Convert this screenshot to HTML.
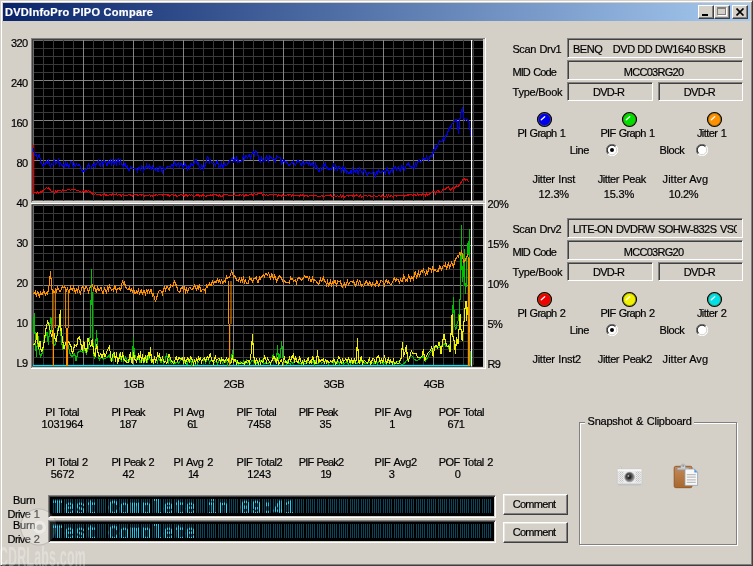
<!DOCTYPE html>
<html lang="en"><head><meta charset="utf-8"><title>DVDInfoPro PIPO Compare</title>
<style>
html,body{margin:0;padding:0}
body{width:753px;height:566px;overflow:hidden;background:#d4d0c8;font-family:"Liberation Sans",sans-serif;font-size:11px;line-height:13px;color:#000;position:relative}
.win{position:absolute;left:0;top:0;width:753px;height:566px;box-sizing:border-box;border:1px solid;border-color:#d4d0c8 #404040 #404040 #d4d0c8;box-shadow:inset 1px 1px 0 #fff,inset -1px -1px 0 #808080}
.title{position:absolute;left:3px;top:3px;width:747px;height:18px;background:linear-gradient(90deg,#0a246a 0%,#a6caf0 100%)}
.t{position:absolute;white-space:pre;line-height:13px;height:13px;-webkit-text-stroke:0.2px #000}
.ttl{color:#fff;font-weight:bold;-webkit-text-stroke:0.2px #fff}
.abs{position:absolute}
.tb{position:absolute;top:5px;width:16px;height:14px;box-sizing:border-box;background:#d4d0c8;border:1px solid;border-color:#fff #404040 #404040 #fff;box-shadow:inset -1px -1px 0 #808080}
.sunk{position:absolute;box-sizing:border-box;border:1px solid;border-color:#808080 #fff #fff #808080;box-shadow:inset 1px 1px 0 #404040,inset -1px -1px 0 #d4d0c8;overflow:hidden}
.btn{position:absolute;box-sizing:border-box;border:1px solid;border-color:#fff #404040 #404040 #fff;box-shadow:inset -1px -1px 0 #808080,inset 1px 1px 0 #e8e6e0;background:#d4d0c8}
.grp{position:absolute;box-sizing:border-box;border:1px solid #808080;box-shadow:1px 1px 0 #fff,inset 1px 1px 0 #fff}
.chart{position:absolute;left:31px;top:38px}
.lcd{position:absolute;box-sizing:border-box;background:#000;border:1px solid;border-color:#808080 #fff #fff #808080;box-shadow:inset 1px 1px 0 #404040,inset -1px -1px 0 #d4d0c8;overflow:hidden}
.lcdbg{position:absolute;left:4px;top:3px;width:440px;height:14px;background:repeating-linear-gradient(90deg,#0a465c 0.00px,#0a465c 1.00px,#000 1.00px,#000 2.00px,#0a465c 2.00px,#0a465c 3.00px,#000 3.00px,#000 4.00px,#0a465c 4.00px,#0a465c 5.00px,#000 5.00px,#000 6.00px,#0a465c 6.00px,#0a465c 7.00px,#000 7.00px,#000 8.00px,#0a465c 8.00px,#0a465c 9.00px,#000 9.00px,#000 11px)}
.lcdclip{position:absolute;left:4px;top:3px;width:440px;height:14px;overflow:hidden}
.lcdtx{position:absolute;left:0;top:-2.2px;font-family:"Liberation Mono",monospace;font-weight:normal;font-size:18px;line-height:20px;height:20px;letter-spacing:0.2px;color:#20dcff;-webkit-text-stroke:0.7px #20dcff;white-space:pre;transform-origin:0 0;transform:scale(1,1.115);-webkit-mask-image:repeating-linear-gradient(90deg,#000 0.00px,#000 1.25px,transparent 1.25px,transparent 1.75px,#000 1.75px,#000 3.25px,transparent 3.25px,transparent 3.75px,#000 3.75px,#000 5.25px,transparent 5.25px,transparent 5.75px,#000 5.75px,#000 7.25px,transparent 7.25px,transparent 7.75px,#000 7.75px,#000 9.25px,transparent 9.25px,transparent 11px);mask-image:repeating-linear-gradient(90deg,#000 0.00px,#000 1.25px,transparent 1.25px,transparent 1.75px,#000 1.75px,#000 3.25px,transparent 3.25px,transparent 3.75px,#000 3.75px,#000 5.25px,transparent 5.25px,transparent 5.75px,#000 5.75px,#000 7.25px,transparent 7.25px,transparent 7.75px,#000 7.75px,#000 9.25px,transparent 9.25px,transparent 11px)}
.wm{position:absolute;left:-1px;top:542px;font-family:"Liberation Sans",sans-serif;font-weight:bold;font-size:27px;line-height:30px;letter-spacing:0.6px;color:rgba(255,255,255,.30);white-space:pre;transform-origin:0 0;transform:scale(.455,1)}
</style></head><body><div id="app" style="position:absolute;left:0;top:0;width:753px;height:566px;will-change:transform">
<div class="win"></div>
<div class="title"></div>
<span class="t ttl" style="left:5.0px;top:6.0px;letter-spacing:0.28px;">DVDInfoPro PIPO Compare</span>
<div class="tb" style="left:698px"><div class="abs" style="left:3px;top:8px;width:6px;height:2px;background:#000"></div></div>
<div class="tb" style="left:714px"><div class="abs" style="left:2px;top:1px;width:9px;height:8px;box-sizing:border-box;border:1px solid #808080;border-top-width:2px;box-shadow:1px 1px 0 #fff"></div></div>
<div class="tb" style="left:732px"><svg class="abs" style="left:3px;top:2px" width="9" height="8" viewBox="0 0 9 8"><path d="M0.5 0.5 L7.5 7.5 M7.5 0.5 L0.5 7.5" stroke="#000" stroke-width="1.7" fill="none"/></svg></div>
<svg class="chart" width="455" height="331" viewBox="31 38 455 331">
<rect x="31" y="38" width="455" height="166.2" fill="#fff"/>
<rect x="31" y="38" width="454" height="164.6" fill="#808080"/>
<rect x="32" y="39" width="453" height="163.6" fill="#d4d0c8"/>
<rect x="32" y="39" width="451" height="162" fill="#404040"/>
<rect x="33" y="40" width="450" height="161" fill="#000"/>
<rect x="31" y="204.2" width="455" height="164.8" fill="#fff"/>
<rect x="31" y="204.2" width="454" height="163.8" fill="#808080"/>
<rect x="32" y="204.2" width="453" height="163.8" fill="#d4d0c8"/>
<rect x="32" y="204.2" width="451" height="162.6" fill="#404040"/>
<rect x="33" y="205" width="450" height="161.7" fill="#000"/>
<rect x="33" y="40" width="450" height="1" fill="#6a6a6a"/><rect x="33" y="48" width="450" height="1" fill="#393939"/><rect x="33" y="56" width="450" height="1" fill="#393939"/><rect x="33" y="64" width="450" height="1" fill="#393939"/><rect x="33" y="72" width="450" height="1" fill="#393939"/><rect x="33" y="80" width="450" height="1" fill="#848484"/><rect x="33" y="88" width="450" height="1" fill="#393939"/><rect x="33" y="96" width="450" height="1" fill="#393939"/><rect x="33" y="104" width="450" height="1" fill="#393939"/><rect x="33" y="112" width="450" height="1" fill="#393939"/><rect x="33" y="120" width="450" height="1" fill="#848484"/><rect x="33" y="128" width="450" height="1" fill="#393939"/><rect x="33" y="136" width="450" height="1" fill="#393939"/><rect x="33" y="144" width="450" height="1" fill="#393939"/><rect x="33" y="152" width="450" height="1" fill="#393939"/><rect x="33" y="160" width="450" height="1" fill="#848484"/><rect x="33" y="168" width="450" height="1" fill="#393939"/><rect x="33" y="176" width="450" height="1" fill="#393939"/><rect x="33" y="184" width="450" height="1" fill="#393939"/><rect x="33" y="192" width="450" height="1" fill="#393939"/><rect x="33" y="200" width="450" height="1" fill="#6a6a6a"/><rect x="33" y="40" width="1" height="161" fill="#6a6a6a"/><rect x="43" y="40" width="1" height="161" fill="#393939"/><rect x="53" y="40" width="1" height="161" fill="#393939"/><rect x="63" y="40" width="1" height="161" fill="#393939"/><rect x="73" y="40" width="1" height="161" fill="#393939"/><rect x="83" y="40" width="1" height="161" fill="#848484"/><rect x="93" y="40" width="1" height="161" fill="#393939"/><rect x="103" y="40" width="1" height="161" fill="#393939"/><rect x="113" y="40" width="1" height="161" fill="#393939"/><rect x="123" y="40" width="1" height="161" fill="#393939"/><rect x="133" y="40" width="1" height="161" fill="#848484"/><rect x="143" y="40" width="1" height="161" fill="#393939"/><rect x="153" y="40" width="1" height="161" fill="#393939"/><rect x="163" y="40" width="1" height="161" fill="#393939"/><rect x="173" y="40" width="1" height="161" fill="#393939"/><rect x="183" y="40" width="1" height="161" fill="#848484"/><rect x="193" y="40" width="1" height="161" fill="#393939"/><rect x="203" y="40" width="1" height="161" fill="#393939"/><rect x="213" y="40" width="1" height="161" fill="#393939"/><rect x="223" y="40" width="1" height="161" fill="#393939"/><rect x="233" y="40" width="1" height="161" fill="#848484"/><rect x="243" y="40" width="1" height="161" fill="#393939"/><rect x="253" y="40" width="1" height="161" fill="#393939"/><rect x="263" y="40" width="1" height="161" fill="#393939"/><rect x="273" y="40" width="1" height="161" fill="#393939"/><rect x="283" y="40" width="1" height="161" fill="#848484"/><rect x="293" y="40" width="1" height="161" fill="#393939"/><rect x="303" y="40" width="1" height="161" fill="#393939"/><rect x="313" y="40" width="1" height="161" fill="#393939"/><rect x="323" y="40" width="1" height="161" fill="#393939"/><rect x="333" y="40" width="1" height="161" fill="#848484"/><rect x="343" y="40" width="1" height="161" fill="#393939"/><rect x="353" y="40" width="1" height="161" fill="#393939"/><rect x="363" y="40" width="1" height="161" fill="#393939"/><rect x="373" y="40" width="1" height="161" fill="#393939"/><rect x="383" y="40" width="1" height="161" fill="#848484"/><rect x="393" y="40" width="1" height="161" fill="#393939"/><rect x="403" y="40" width="1" height="161" fill="#393939"/><rect x="413" y="40" width="1" height="161" fill="#393939"/><rect x="423" y="40" width="1" height="161" fill="#393939"/><rect x="433" y="40" width="1" height="161" fill="#848484"/><rect x="443" y="40" width="1" height="161" fill="#393939"/><rect x="453" y="40" width="1" height="161" fill="#393939"/><rect x="463" y="40" width="1" height="161" fill="#393939"/><rect x="473" y="40" width="1" height="161" fill="#393939"/><rect x="33" y="205" width="450" height="1" fill="#6a6a6a"/><rect x="33" y="213" width="450" height="1" fill="#393939"/><rect x="33" y="221" width="450" height="1" fill="#393939"/><rect x="33" y="229" width="450" height="1" fill="#393939"/><rect x="33" y="237" width="450" height="1" fill="#393939"/><rect x="33" y="245" width="450" height="1" fill="#848484"/><rect x="33" y="253" width="450" height="1" fill="#393939"/><rect x="33" y="261" width="450" height="1" fill="#393939"/><rect x="33" y="269" width="450" height="1" fill="#393939"/><rect x="33" y="277" width="450" height="1" fill="#393939"/><rect x="33" y="285" width="450" height="1" fill="#848484"/><rect x="33" y="293" width="450" height="1" fill="#393939"/><rect x="33" y="301" width="450" height="1" fill="#393939"/><rect x="33" y="309" width="450" height="1" fill="#393939"/><rect x="33" y="317" width="450" height="1" fill="#393939"/><rect x="33" y="325" width="450" height="1" fill="#848484"/><rect x="33" y="333" width="450" height="1" fill="#393939"/><rect x="33" y="341" width="450" height="1" fill="#393939"/><rect x="33" y="349" width="450" height="1" fill="#393939"/><rect x="33" y="357" width="450" height="1" fill="#393939"/><rect x="33" y="205" width="1" height="160" fill="#6a6a6a"/><rect x="43" y="205" width="1" height="160" fill="#393939"/><rect x="53" y="205" width="1" height="160" fill="#393939"/><rect x="63" y="205" width="1" height="160" fill="#393939"/><rect x="73" y="205" width="1" height="160" fill="#393939"/><rect x="83" y="205" width="1" height="160" fill="#848484"/><rect x="93" y="205" width="1" height="160" fill="#393939"/><rect x="103" y="205" width="1" height="160" fill="#393939"/><rect x="113" y="205" width="1" height="160" fill="#393939"/><rect x="123" y="205" width="1" height="160" fill="#393939"/><rect x="133" y="205" width="1" height="160" fill="#848484"/><rect x="143" y="205" width="1" height="160" fill="#393939"/><rect x="153" y="205" width="1" height="160" fill="#393939"/><rect x="163" y="205" width="1" height="160" fill="#393939"/><rect x="173" y="205" width="1" height="160" fill="#393939"/><rect x="183" y="205" width="1" height="160" fill="#848484"/><rect x="193" y="205" width="1" height="160" fill="#393939"/><rect x="203" y="205" width="1" height="160" fill="#393939"/><rect x="213" y="205" width="1" height="160" fill="#393939"/><rect x="223" y="205" width="1" height="160" fill="#393939"/><rect x="233" y="205" width="1" height="160" fill="#848484"/><rect x="243" y="205" width="1" height="160" fill="#393939"/><rect x="253" y="205" width="1" height="160" fill="#393939"/><rect x="263" y="205" width="1" height="160" fill="#393939"/><rect x="273" y="205" width="1" height="160" fill="#393939"/><rect x="283" y="205" width="1" height="160" fill="#848484"/><rect x="293" y="205" width="1" height="160" fill="#393939"/><rect x="303" y="205" width="1" height="160" fill="#393939"/><rect x="313" y="205" width="1" height="160" fill="#393939"/><rect x="323" y="205" width="1" height="160" fill="#393939"/><rect x="333" y="205" width="1" height="160" fill="#848484"/><rect x="343" y="205" width="1" height="160" fill="#393939"/><rect x="353" y="205" width="1" height="160" fill="#393939"/><rect x="363" y="205" width="1" height="160" fill="#393939"/><rect x="373" y="205" width="1" height="160" fill="#393939"/><rect x="383" y="205" width="1" height="160" fill="#848484"/><rect x="393" y="205" width="1" height="160" fill="#393939"/><rect x="403" y="205" width="1" height="160" fill="#393939"/><rect x="413" y="205" width="1" height="160" fill="#393939"/><rect x="423" y="205" width="1" height="160" fill="#393939"/><rect x="433" y="205" width="1" height="160" fill="#848484"/><rect x="443" y="205" width="1" height="160" fill="#393939"/><rect x="453" y="205" width="1" height="160" fill="#393939"/><rect x="463" y="205" width="1" height="160" fill="#393939"/><rect x="473" y="205" width="1" height="160" fill="#393939"/>
<rect x="33" y="364.9" width="437.5" height="1.5" fill="#10e0f0"/>
<clipPath id="cu"><rect x="33" y="40" width="450" height="161"/></clipPath>
<g clip-path="url(#cu)">
<polyline points="34.5,192.6 35.5,192.3 36.5,193.3 37.5,192.1 38.5,193.1 39.5,192.7 40.5,191.8 41.5,192.1 42.5,190.6 43.5,190.8 44.5,189.4 45.5,188.4 46.5,187.6 47.5,188.2 48.5,187.7 49.5,188.9 50.5,190.5 51.5,191.5 52.5,191.2 53.5,191.2 54.5,192.8 55.5,191.0 56.5,192.4 57.5,191.1 58.5,190.6 59.5,190.3 60.5,190.6 61.5,191.5 62.5,190.1 63.5,190.8 64.5,190.8 65.5,190.2 66.5,190.4 67.5,189.4 68.5,189.3 69.5,189.5 70.5,190.3 71.5,189.7 72.5,189.4 73.5,189.8 74.5,189.5 75.5,189.3 76.5,190.7 77.5,190.9 78.5,190.4 79.5,191.4 80.5,191.5 81.5,192.2 82.5,191.8 83.5,190.9 84.5,192.2 85.5,190.4 86.5,190.9 87.5,191.5 88.5,190.6 89.5,191.9 90.5,191.6 91.5,193.5 92.5,194.1 93.5,193.8 94.5,194.6 95.5,193.6 96.5,194.5 97.5,194.4 98.5,194.5 99.5,194.3 100.5,195.2 101.5,195.4 102.5,194.5 103.5,194.9 104.5,193.7 105.5,195.0 106.5,195.0 107.5,195.7 108.5,195.4 109.5,194.3 110.5,194.5 111.5,195.1 112.5,193.9 113.5,194.8 114.5,194.2 115.5,194.1 116.5,194.0 117.5,195.5 118.5,194.2 119.5,194.5 120.5,194.8 121.5,195.8 122.5,194.2 123.5,194.9 124.5,195.1 125.5,195.8 126.5,195.7 127.5,195.8 128.5,194.6 129.5,194.9 130.5,194.8 131.5,195.9 132.5,196.0 133.5,194.4 134.5,194.5 135.5,194.6 136.5,194.6 137.5,195.1 138.5,195.3 139.5,194.7 140.5,194.2 141.5,195.0 142.5,194.9 143.5,195.3 144.5,196.1 145.5,195.6 146.5,195.3 147.5,195.5 148.5,195.6 149.5,194.4 150.5,196.1 151.5,195.8 152.5,196.0 153.5,195.9 154.5,195.1 155.5,195.1 156.5,194.5 157.5,195.6 158.5,194.4 159.5,194.5 160.5,194.8 161.5,194.7 162.5,195.0 163.5,194.5 164.5,194.4 165.5,194.7 166.5,194.6 167.5,195.1 168.5,194.5 169.5,196.2 170.5,195.6 171.5,194.7 172.5,194.9 173.5,195.1 174.5,195.2 175.5,194.7 176.5,196.2 177.5,196.5 178.5,195.4 179.5,195.5 180.5,194.7 181.5,194.7 182.5,195.2 183.5,195.0 184.5,196.1 185.5,194.8 186.5,194.5 187.5,196.3 188.5,195.5 189.5,194.7 190.5,195.5 191.5,194.5 192.5,195.5 193.5,196.4 194.5,196.1 195.5,195.8 196.5,194.9 197.5,195.1 198.5,194.7 199.5,195.9 200.5,195.4 201.5,195.9 202.5,195.0 203.5,194.8 204.5,195.9 205.5,196.3 206.5,196.0 207.5,195.9 208.5,195.9 209.5,195.8 210.5,194.7 211.5,195.3 212.5,195.0 213.5,194.3 214.5,194.3 215.5,194.8 216.5,194.8 217.5,195.6 218.5,196.1 219.5,195.1 220.5,196.1 221.5,196.2 222.5,196.1 223.5,194.9 224.5,194.6 225.5,194.6 226.5,194.6 227.5,194.6 228.5,195.4 229.5,195.9 230.5,195.8 231.5,195.1 232.5,195.4 233.5,195.7 234.5,194.3 235.5,195.4 236.5,195.9 237.5,195.7 238.5,195.6 239.5,195.0 240.5,194.4 241.5,195.6 242.5,194.7 243.5,195.6 244.5,196.0 245.5,194.8 246.5,194.8 247.5,195.9 248.5,195.5 249.5,194.3 250.5,194.2 251.5,194.0 252.5,195.3 253.5,195.0 254.5,193.4 255.5,194.6 256.5,194.7 257.5,193.9 258.5,193.3 259.5,193.8 260.5,193.1 261.5,193.0 262.5,195.0 263.5,194.5 264.5,194.4 265.5,195.3 266.5,194.4 267.5,195.4 268.5,195.5 269.5,194.4 270.5,194.5 271.5,194.6 272.5,194.5 273.5,195.2 274.5,194.6 275.5,194.9 276.5,194.4 277.5,195.9 278.5,194.8 279.5,195.1 280.5,195.3 281.5,196.0 282.5,195.0 283.5,196.1 284.5,195.2 285.5,195.3 286.5,195.3 287.5,194.3 288.5,195.2 289.5,194.7 290.5,194.3 291.5,196.0 292.5,194.7 293.5,195.3 294.5,195.9 295.5,195.5 296.5,195.1 297.5,195.5 298.5,195.6 299.5,196.1 300.5,194.7 301.5,195.6 302.5,195.0 303.5,195.1 304.5,196.1 305.5,195.6 306.5,195.7 307.5,196.1 308.5,196.5 309.5,195.5 310.5,195.9 311.5,195.7 312.5,195.7 313.5,196.1 314.5,195.6 315.5,195.8 316.5,195.7 317.5,196.7 318.5,196.2 319.5,196.6 320.5,196.7 321.5,195.4 322.5,196.0 323.5,196.8 324.5,196.6 325.5,195.2 326.5,195.2 327.5,195.8 328.5,195.1 329.5,195.5 330.5,195.1 331.5,196.3 332.5,196.6 333.5,196.8 334.5,195.3 335.5,196.4 336.5,196.3 337.5,195.3 338.5,196.8 339.5,196.9 340.5,195.4 341.5,196.9 342.5,195.8 343.5,196.0 344.5,197.0 345.5,196.7 346.5,195.3 347.5,195.9 348.5,196.0 349.5,195.7 350.5,195.4 351.5,195.6 352.5,196.4 353.5,195.0 354.5,196.1 355.5,195.9 356.5,195.0 357.5,195.7 358.5,196.2 359.5,196.0 360.5,195.1 361.5,197.0 362.5,196.6 363.5,196.9 364.5,195.2 365.5,195.5 366.5,195.1 367.5,196.6 368.5,195.5 369.5,195.3 370.5,195.8 371.5,196.8 372.5,196.6 373.5,195.5 374.5,195.3 375.5,196.8 376.5,196.1 377.5,196.4 378.5,195.2 379.5,195.1 380.5,196.4 381.5,195.9 382.5,195.1 383.5,196.9 384.5,196.3 385.5,196.6 386.5,195.2 387.5,196.7 388.5,195.1 389.5,196.7 390.5,195.9 391.5,195.7 392.5,196.1 393.5,196.9 394.5,195.5 395.5,195.3 396.5,196.1 397.5,195.5 398.5,195.2 399.5,195.3 400.5,195.1 401.5,195.3 402.5,195.5 403.5,195.4 404.5,196.2 405.5,195.2 406.5,195.6 407.5,194.9 408.5,195.1 409.5,194.4 410.5,194.8 411.5,194.3 412.5,195.6 413.5,195.2 414.5,194.4 415.5,194.9 416.5,195.7 417.5,194.0 418.5,195.3 419.5,194.4 420.5,194.4 421.5,195.0 422.5,194.0 423.5,194.2 424.5,194.4 425.5,195.7 426.5,193.3 427.5,194.9 428.5,194.4 429.5,194.0 430.5,193.1 431.5,192.7 432.5,191.4 433.5,191.5 434.5,191.1 435.5,193.3 436.5,191.3 437.5,190.8 438.5,190.3 439.5,192.8 440.5,192.7 441.5,191.7 442.5,190.0 443.5,189.5 444.5,189.4 445.5,189.4 446.5,187.3 447.5,187.3 448.5,186.4 449.5,189.4 450.5,190.0 451.5,188.9 452.5,187.9 453.5,190.2 454.5,187.5 455.5,187.3 456.5,185.7 457.5,186.7 458.5,186.2 459.5,185.0 460.5,182.6 461.5,182.5 462.5,179.7 463.5,179.7 464.5,178.8 465.5,180.4 466.5,179.6 467.5,180.0 468.5,181.8" fill="none" stroke="#f00000" stroke-width="1.1" shape-rendering="crispEdges"/>
<rect x="33" y="145" width="1.3" height="49" fill="#e80000"/>
<polyline points="33.5,148.5 34.5,155.1 35.5,155.2 36.5,155.0 37.5,158.5 38.5,155.6 39.5,154.5 40.5,161.2 41.5,163.3 42.5,164.7 43.5,166.2 44.5,163.3 45.5,164.3 46.5,161.2 47.5,163.1 48.5,160.4 49.5,164.6 50.5,166.4 51.5,163.6 52.5,164.7 53.5,163.8 54.5,159.1 55.5,164.0 56.5,163.0 57.5,161.1 58.5,159.3 59.5,165.5 60.5,162.9 61.5,164.7 62.5,166.0 63.5,164.9 64.5,166.5 65.5,162.8 66.5,165.8 67.5,163.4 68.5,167.0 69.5,166.7 70.5,161.2 71.5,161.7 72.5,162.5 73.5,168.1 74.5,164.4 75.5,166.0 76.5,163.9 77.5,165.6 78.5,164.9 79.5,164.8 80.5,167.3 81.5,168.6 82.5,172.2 83.5,170.6 84.5,171.1 85.5,169.2 86.5,169.4 87.5,166.9 88.5,162.9 89.5,167.7 90.5,168.2 91.5,167.6 92.5,165.0 93.5,165.8 94.5,162.0 95.5,166.3 96.5,164.2 97.5,162.0 98.5,160.2 99.5,165.6 100.5,166.5 101.5,160.0 102.5,165.2 103.5,162.4 104.5,160.5 105.5,161.5 106.5,164.9 107.5,165.7 108.5,159.7 109.5,163.8 110.5,159.5 111.5,163.9 112.5,160.7 113.5,164.2 114.5,164.5 115.5,160.7 116.5,163.8 117.5,159.2 118.5,158.8 119.5,163.7 120.5,160.8 121.5,163.2 122.5,165.4 123.5,167.0 124.5,163.9 125.5,163.2 126.5,169.3 127.5,165.5 128.5,170.3 129.5,170.0 130.5,166.4 131.5,167.2 132.5,167.8 133.5,168.8 134.5,168.6 135.5,168.4 136.5,168.9 137.5,171.2 138.5,168.1 139.5,167.5 140.5,169.6 141.5,166.1 142.5,166.6 143.5,171.4 144.5,168.2 145.5,168.3 146.5,164.5 147.5,167.4 148.5,168.6 149.5,164.5 150.5,168.9 151.5,169.3 152.5,165.3 153.5,169.6 154.5,168.7 155.5,170.4 156.5,168.2 157.5,171.0 158.5,171.4 159.5,166.5 160.5,166.7 161.5,170.9 162.5,172.7 163.5,167.3 164.5,168.6 165.5,169.3 166.5,167.1 167.5,167.1 168.5,166.4 169.5,166.3 170.5,167.4 171.5,164.8 172.5,164.9 173.5,167.2 174.5,161.3 175.5,164.7 176.5,165.9 177.5,163.1 178.5,162.8 179.5,167.4 180.5,163.6 181.5,163.6 182.5,165.6 183.5,167.6 184.5,163.4 185.5,165.2 186.5,165.4 187.5,169.1 188.5,166.4 189.5,169.5 190.5,164.0 191.5,164.0 192.5,165.1 193.5,165.6 194.5,161.2 195.5,159.6 196.5,160.1 197.5,164.3 198.5,163.1 199.5,168.5 200.5,169.2 201.5,165.0 202.5,166.2 203.5,169.2 204.5,166.0 205.5,165.2 206.5,159.9 207.5,156.3 208.5,157.3 209.5,162.4 210.5,160.1 211.5,162.1 212.5,163.4 213.5,163.4 214.5,163.3 215.5,167.0 216.5,161.5 217.5,160.4 218.5,167.2 219.5,166.7 220.5,167.5 221.5,163.5 222.5,167.2 223.5,167.1 224.5,162.0 225.5,165.6 226.5,165.8 227.5,164.2 228.5,162.7 229.5,160.7 230.5,160.7 231.5,159.4 232.5,157.9 233.5,161.2 234.5,158.7 235.5,162.1 236.5,156.4 237.5,162.4 238.5,160.7 239.5,162.2 240.5,161.8 241.5,161.6 242.5,159.1 243.5,154.8 244.5,159.9 245.5,155.4 246.5,155.7 247.5,157.8 248.5,156.2 249.5,154.9 250.5,158.1 251.5,155.2 252.5,152.7 253.5,151.5 254.5,155.0 255.5,151.0 256.5,152.0 257.5,153.7 258.5,157.4 259.5,161.6 260.5,162.3 261.5,156.3 262.5,160.2 263.5,161.2 264.5,160.5 265.5,160.8 266.5,155.0 267.5,159.6 268.5,161.4 269.5,155.7 270.5,157.4 271.5,157.5 272.5,159.4 273.5,158.8 274.5,159.3 275.5,161.5 276.5,156.1 277.5,156.5 278.5,157.2 279.5,157.2 280.5,157.1 281.5,164.2 282.5,163.8 283.5,158.8 284.5,162.3 285.5,161.4 286.5,161.9 287.5,162.7 288.5,165.3 289.5,165.4 290.5,163.9 291.5,162.5 292.5,163.3 293.5,161.6 294.5,164.5 295.5,165.5 296.5,162.8 297.5,160.5 298.5,161.0 299.5,162.2 300.5,163.8 301.5,165.0 302.5,162.1 303.5,165.2 304.5,163.9 305.5,162.5 306.5,162.1 307.5,163.0 308.5,164.5 309.5,162.4 310.5,164.8 311.5,163.8 312.5,163.0 313.5,165.9 314.5,167.8 315.5,164.0 316.5,167.3 317.5,168.1 318.5,171.5 319.5,171.5 320.5,167.0 321.5,170.4 322.5,169.2 323.5,164.9 324.5,166.0 325.5,163.4 326.5,168.6 327.5,167.7 328.5,169.5 329.5,169.0 330.5,168.4 331.5,169.1 332.5,168.2 333.5,165.2 334.5,169.0 335.5,165.1 336.5,166.4 337.5,171.2 338.5,166.3 339.5,166.9 340.5,167.1 341.5,172.8 342.5,167.8 343.5,166.7 344.5,172.7 345.5,167.5 346.5,172.8 347.5,171.6 348.5,172.8 349.5,173.7 350.5,171.1 351.5,172.7 352.5,167.3 353.5,172.6 354.5,170.8 355.5,172.3 356.5,168.0 357.5,172.7 358.5,174.1 359.5,167.8 360.5,169.9 361.5,171.9 362.5,174.1 363.5,170.2 364.5,170.0 365.5,170.8 366.5,173.7 367.5,175.0 368.5,172.7 369.5,172.8 370.5,173.3 371.5,173.3 372.5,173.7 373.5,170.8 374.5,173.4 375.5,176.4 376.5,171.9 377.5,173.9 378.5,169.2 379.5,172.6 380.5,172.8 381.5,172.3 382.5,171.1 383.5,170.9 384.5,172.0 385.5,173.9 386.5,168.5 387.5,168.1 388.5,172.8 389.5,174.0 390.5,171.0 391.5,170.1 392.5,171.8 393.5,167.7 394.5,168.0 395.5,167.2 396.5,169.7 397.5,167.4 398.5,166.5 399.5,169.5 400.5,171.2 401.5,166.2 402.5,169.0 403.5,166.7 404.5,169.6 405.5,167.5 406.5,165.0 407.5,164.5 408.5,162.9 409.5,166.0 410.5,166.2 411.5,166.6 412.5,168.2 413.5,166.5 414.5,168.2 415.5,162.2 416.5,166.8 417.5,161.6 418.5,161.4 419.5,159.9 420.5,162.0 421.5,161.3 422.5,158.8 423.5,157.7 424.5,158.9 425.5,159.6 426.5,156.5 427.5,159.0 428.5,160.8 429.5,157.4 430.5,155.8 431.5,156.0 432.5,156.3 433.5,150.9 434.5,146.8 435.5,149.7 436.5,147.8 437.5,145.4 438.5,143.4 439.5,140.9 440.5,141.5 441.5,141.5 442.5,141.1 443.5,137.9 444.5,139.8 445.5,136.3 446.5,134.7 447.5,133.9 448.5,129.3 449.5,127.4 450.5,128.5 451.5,124.8 452.5,123.4 453.5,122.7 454.5,121.5 455.5,119.2 456.5,119.1 457.5,123.9 458.5,134.0 459.5,121.7 460.5,115.4 461.5,111.0 462.5,107.4 463.5,118.1 464.5,119.0 465.5,120.7 466.5,119.7 467.5,119.5 468.5,121.0 469.5,122.5 470.5,136.0" fill="none" stroke="#0000f0" stroke-width="1.1" shape-rendering="crispEdges"/>
</g>
<clipPath id="cl"><rect x="33" y="205" width="450" height="161.5"/></clipPath>
<g clip-path="url(#cl)">
<polyline points="33.5,332.4 34.2,313.3 35.0,332.4 36.4,356.5 37.8,333.8 39.2,352.2 40.6,356.5 42.7,352.2 44.1,339.5 45.6,336.7 47.0,332.4 48.4,345.2 49.8,325.4 50.9,316.9 51.9,328.2 52.6,343.7 54.8,345.2 56.9,336.7 58.3,326.8 59.7,325.4 61.1,336.7 62.5,349.4 64.7,346.6 66.1,343.7 68.2,345.2 70.3,355.1 72.4,356.5 74.6,353.6 76.0,360.7 78.1,352.2 80.2,350.8 82.3,352.2 84.5,349.4 86.6,353.6 88.7,346.6 90.1,336.7 90.8,312.6 91.7,269.1 92.5,338.1 94.4,359.3 95.8,343.7 96.5,329.6 97.6,349.4 99.3,360.7 101.4,356.5 103.6,359.3 106.4,357.9 109.2,355.1 110.5,359.5 111.5,361.1 112.5,360.7 113.5,353.4 114.5,355.5 115.5,360.5 116.5,354.5 117.5,361.1 118.5,359.8 119.5,354.9 120.5,357.4 121.5,361.7 122.5,353.1 123.5,361.1 124.5,360.8 125.5,355.9 126.5,360.3 127.5,360.5 128.5,361.8 129.5,361.8 130.5,358.1 131.5,361.1 132.5,358.4 133.5,337.0 134.5,360.1 135.5,355.6 136.5,360.3 137.5,359.8 138.5,357.6 139.5,362.5 140.5,362.6 141.5,357.8 142.5,358.5 143.5,362.2 144.5,362.5 145.5,359.0 146.5,357.3 147.5,362.5 148.5,357.1 149.5,357.7 150.5,360.0 151.5,361.2 152.5,362.8 153.5,363.0 154.5,356.8 155.5,362.2 156.5,359.1 157.5,362.1 158.5,358.0 159.5,359.9 160.5,361.9 161.5,362.5 162.5,358.8 163.5,362.9 164.5,362.2 165.5,360.1 166.5,353.0 167.5,359.9 168.5,362.2 169.5,357.4 170.5,362.8 171.5,363.4 172.5,362.6 173.5,361.7 174.5,363.5 175.5,363.2 176.5,362.4 177.5,361.2 178.5,363.6 179.5,362.7 180.5,359.0 181.5,358.2 182.5,360.8 183.5,360.6 184.5,361.4 185.5,363.7 186.5,364.0 187.5,364.0 188.5,358.9 189.5,360.6 190.5,358.5 191.5,364.0 192.5,361.1 193.5,362.1 194.5,360.4 195.5,363.0 196.5,358.3 197.5,363.9 198.5,361.7 199.5,360.5 200.5,359.2 201.5,360.5 202.5,360.7 203.5,360.1 204.5,359.2 205.5,362.9 206.5,360.9 207.5,359.3 208.5,359.6 209.5,362.5 210.5,360.2 211.5,359.7 212.5,361.7 213.5,361.4 214.5,362.7 215.5,361.6 216.5,361.5 217.5,363.9 218.5,361.3 219.5,358.8 220.5,359.7 221.5,360.8 222.5,362.8 223.5,360.8 224.5,361.7 225.5,362.5 226.5,360.1 227.5,363.9 228.5,360.7 229.5,364.0 230.5,360.6 231.5,359.8 232.5,350.0 233.5,358.1 234.5,361.2 235.5,361.5 236.5,360.5 237.5,363.5 238.5,364.0 239.5,363.3 240.5,361.8 241.5,363.6 242.5,363.7 243.5,360.6 244.5,361.9 245.5,362.8 246.5,360.6 247.5,363.3 248.5,361.8 249.5,363.6 250.5,362.9 251.5,361.1 252.5,360.5 253.5,360.7 254.5,363.0 255.5,362.2 256.5,363.3 257.5,363.8 258.5,362.6 259.5,360.9 260.5,360.9 261.5,361.6 262.5,360.3 263.5,363.4 264.5,363.7 265.5,362.8 266.5,363.4 267.5,363.6 268.5,362.9 269.5,362.0 270.5,362.2 271.5,362.6 272.5,357.4 273.5,354.0 274.5,359.7 275.5,362.6 276.5,362.6 277.5,345.0 278.5,362.0 279.5,354.7 280.5,356.5 281.5,341.0 282.5,352.7 283.5,361.5 284.5,362.1 285.5,361.9 286.5,364.0 287.5,361.0 288.5,363.5 289.5,363.8 290.5,364.0 291.5,362.1 292.5,362.9 293.5,362.1 294.5,362.0 295.5,361.3 296.5,360.5 297.5,361.9 298.5,363.7 299.5,362.8 300.5,363.7 301.5,364.0 302.5,362.8 303.5,361.8 304.5,363.7 305.5,363.5 306.5,363.3 307.5,362.0 308.5,362.7 309.5,362.3 310.5,361.7 311.5,363.2 312.5,361.6 313.5,361.1 314.5,363.9 315.5,361.0 316.5,362.0 317.5,363.8 318.5,363.0 319.5,362.4 320.5,361.2 321.5,363.3 322.5,362.6 323.5,361.4 324.5,361.8 325.5,361.2 326.5,363.0 327.5,362.4 328.5,363.7 329.5,362.2 330.5,361.8 331.5,362.5 332.5,362.2 333.5,363.7 334.5,361.4 335.5,361.1 336.5,361.1 337.5,362.8 338.5,361.9 339.5,363.5 340.5,361.4 341.5,361.6 342.5,363.4 343.5,363.9 344.5,363.1 345.5,362.8 346.5,362.0 347.5,363.0 348.5,364.0 349.5,361.8 350.5,364.0 351.5,361.9 352.5,363.8 353.5,363.4 354.5,361.9 355.5,363.8 356.5,363.8 357.5,362.9 358.5,362.2 359.5,361.7 360.5,362.3 361.5,361.2 362.5,363.0 363.5,361.2 364.5,363.9 365.5,363.7 366.5,362.9 367.5,363.5 368.5,362.1 369.5,362.5 370.5,362.9 371.5,361.7 372.5,362.7 373.5,363.5 374.5,363.3 375.5,361.7 376.5,361.4 377.5,363.7 378.5,361.6 379.5,361.1 380.5,362.9 381.5,362.7 382.5,363.7 383.5,362.8 384.5,362.9 385.5,362.6 386.5,364.0 387.5,361.1 388.5,362.9 389.5,363.2 390.5,361.8 391.5,362.7 392.5,363.0 393.5,362.3 394.5,363.9 395.5,362.8 396.5,363.2 397.5,361.2 398.5,361.3 400.0,363.6 402.1,364.3 404.2,363.6 406.4,360.7 408.5,359.3 410.6,355.1 412.7,356.5 414.1,359.3 417.0,360.7 419.1,359.3 421.2,357.9 423.3,356.5 425.5,360.7 427.6,357.9 429.7,353.6 431.8,350.8 433.9,348.0 436.1,346.6 438.2,348.0 440.3,346.6 442.4,345.2 444.6,343.7 446.0,346.6 448.1,346.6 449.5,349.4 450.9,335.3 452.3,318.3 453.5,297.1 454.5,325.4 455.9,329.6 457.3,322.5 458.7,319.7 460.1,298.5 460.8,273.0 461.4,224.9 462.0,268.8 462.8,281.5 463.6,261.7 464.4,249.0 464.9,284.3 465.8,294.2 466.5,264.5 467.9,243.3 468.7,254.6 469.4,229.2 470.0,360.7 470.3,365.0" fill="none" stroke="#00c000" stroke-width="1.1" shape-rendering="crispEdges"/>
<polyline points="33.5,345.2 35.7,342.3 37.1,332.4 38.5,349.4 39.9,340.9 41.3,352.2 43.4,346.6 44.9,336.7 46.3,326.8 47.7,321.1 49.1,325.4 50.5,332.4 51.9,336.7 53.3,328.2 54.8,338.1 56.2,340.9 57.6,332.4 59.0,326.8 60.4,309.8 61.1,332.4 62.5,338.1 63.9,349.4 65.4,343.7 67.1,340.9 68.9,342.3 71.0,346.6 72.4,353.6 74.6,345.2 76.7,346.6 78.1,338.1 79.5,336.7 80.9,343.7 82.3,350.8 83.7,340.9 85.2,349.4 86.6,352.2 88.0,338.1 89.4,343.7 90.8,346.6 92.2,339.5 93.6,352.2 95.1,356.5 96.5,343.7 97.9,352.2 99.3,356.5 100.7,353.6 102.1,357.9 103.6,352.2 105.0,356.5 107.1,350.8 109.2,346.6 110.5,353.9 111.5,361.9 112.5,354.5 113.5,353.8 114.5,352.9 115.5,362.4 116.5,351.6 117.5,362.3 118.5,360.3 119.5,357.1 120.5,352.4 121.5,360.4 122.5,352.5 123.5,358.2 124.5,360.8 125.5,360.8 126.5,362.0 127.5,362.7 128.5,362.3 129.5,356.7 130.5,352.1 131.5,362.3 132.5,362.9 133.5,352.4 134.5,358.9 135.5,360.3 136.5,361.9 137.5,358.3 138.5,355.2 139.5,359.9 140.5,351.0 141.5,363.1 142.5,354.0 143.5,363.2 144.5,359.7 145.5,355.3 146.5,362.8 147.5,356.9 148.5,353.9 149.5,358.3 150.5,347.0 151.5,363.1 152.5,360.6 153.5,362.9 154.5,355.7 155.5,361.9 156.5,360.5 157.5,353.7 158.5,355.8 159.5,354.1 160.5,360.6 161.5,360.3 162.5,357.6 163.5,360.5 164.5,362.2 165.5,361.3 166.5,363.2 167.5,361.6 168.5,354.5 169.5,354.9 170.5,359.2 171.5,360.5 172.5,362.0 173.5,363.6 174.5,362.6 175.5,357.6 176.5,356.5 177.5,362.0 178.5,357.7 179.5,357.8 180.5,358.8 181.5,359.1 182.5,358.1 183.5,362.0 184.5,358.7 185.5,362.7 186.5,361.0 187.5,358.0 188.5,358.9 189.5,362.6 190.5,355.9 191.5,359.4 192.5,360.1 193.5,364.0 194.5,360.4 195.5,362.9 196.5,359.2 197.5,361.2 198.5,357.6 199.5,359.5 200.5,357.8 201.5,362.2 202.5,359.5 203.5,358.5 204.5,357.5 205.5,362.2 206.5,357.3 207.5,357.0 208.5,359.1 209.5,355.7 210.5,353.0 211.5,360.8 212.5,360.7 213.5,363.4 214.5,357.5 215.5,356.3 216.5,361.2 217.5,359.1 218.5,358.8 219.5,358.7 220.5,363.4 221.5,358.2 222.5,360.3 223.5,359.5 224.5,361.7 225.5,359.9 226.5,358.3 227.5,359.8 228.5,358.9 229.5,364.0 230.5,363.5 231.5,361.6 232.5,355.0 233.5,363.2 234.5,359.3 235.5,359.9 236.5,363.9 237.5,361.4 238.5,363.1 239.5,363.9 240.5,363.6 241.5,362.5 242.5,363.4 243.5,363.3 244.5,363.9 245.5,361.4 246.5,362.1 247.5,360.2 248.5,360.4 249.5,363.1 250.5,357.1 251.5,351.0 252.5,334.0 253.5,353.0 254.5,361.9 255.5,363.7 256.5,357.9 257.5,362.2 258.5,363.9 259.5,360.2 260.5,363.8 261.5,360.8 262.5,362.4 263.5,360.5 264.5,356.5 265.5,358.1 266.5,361.8 267.5,358.1 268.5,359.9 269.5,362.2 270.5,363.6 271.5,360.3 272.5,360.6 273.5,356.5 274.5,356.4 275.5,360.2 276.5,362.3 277.5,357.2 278.5,364.0 279.5,363.7 280.5,360.6 281.5,360.1 282.5,363.6 283.5,360.0 284.5,357.3 285.5,362.2 286.5,361.7 287.5,363.1 288.5,362.7 289.5,356.3 290.5,362.1 291.5,356.5 292.5,357.0 293.5,353.0 294.5,362.9 295.5,356.2 296.5,361.2 297.5,361.9 298.5,362.6 299.5,356.2 300.5,361.2 301.5,362.8 302.5,361.4 303.5,363.7 304.5,360.1 305.5,361.6 306.5,362.7 307.5,358.5 308.5,358.0 309.5,364.0 310.5,360.9 311.5,362.9 312.5,356.8 313.5,358.5 314.5,363.0 315.5,362.9 316.5,363.5 317.5,350.0 318.5,362.7 319.5,360.2 320.5,361.4 321.5,359.9 322.5,360.2 323.5,358.9 324.5,363.7 325.5,358.7 326.5,362.7 327.5,360.9 328.5,362.4 329.5,362.7 330.5,360.9 331.5,361.5 332.5,362.3 333.5,358.9 334.5,360.4 335.5,363.9 336.5,363.0 337.5,361.5 338.5,357.0 339.5,357.3 340.5,360.8 341.5,364.0 342.5,358.5 343.5,361.8 344.5,360.5 345.5,359.2 346.5,360.0 347.5,361.3 348.5,357.0 349.5,362.1 350.5,362.0 351.5,357.7 352.5,363.3 353.5,362.7 354.5,358.0 355.5,363.9 356.5,357.9 357.5,338.0 358.5,361.7 359.5,362.8 360.5,358.5 361.5,357.0 362.5,363.6 363.5,361.4 364.5,360.7 365.5,361.2 366.5,362.5 367.5,363.5 368.5,360.4 369.5,358.1 370.5,363.9 371.5,363.1 372.5,358.1 373.5,358.4 374.5,359.7 375.5,364.0 376.5,359.1 377.5,356.3 378.5,356.0 379.5,359.3 380.5,363.9 381.5,357.8 382.5,363.2 383.5,359.8 384.5,356.6 385.5,359.2 386.5,363.6 387.5,362.7 388.5,357.0 389.5,363.5 390.5,360.2 391.5,361.9 392.5,363.5 393.5,360.1 394.5,363.9 395.5,363.7 396.5,362.1 397.5,363.8 398.5,363.9 400.0,360.7 401.4,357.9 402.5,342.3 403.5,356.5 405.0,352.2 406.4,345.2 407.4,357.9 408.5,360.7 409.9,356.5 411.3,350.8 412.7,353.6 414.1,353.6 416.3,353.6 417.7,357.9 419.8,357.9 421.9,356.5 423.3,349.4 424.8,360.7 426.2,356.5 427.6,353.6 429.0,352.2 430.4,350.8 431.8,346.6 433.2,356.5 434.7,346.6 436.1,345.2 437.5,348.0 438.9,342.3 440.3,346.6 441.0,353.6 442.4,343.7 443.8,333.8 445.0,339.5 446.0,343.7 447.4,346.6 448.8,345.2 450.2,352.2 451.2,329.6 452.1,314.0 453.0,336.7 454.5,342.3 455.4,353.6 456.6,336.7 458.0,343.7 459.1,328.2 460.1,314.0 461.1,331.0 462.2,340.9 463.4,326.8 464.4,318.3 465.3,304.1 466.1,300.6 466.5,321.1 467.6,307.0 468.6,312.6 469.3,323.9 469.7,332.4" fill="none" stroke="#f0f000" stroke-width="1.1" shape-rendering="crispEdges"/>
<polyline points="33.5,293.8 34.5,293.2 35.5,291.5 36.5,297.0 37.5,290.7 38.5,294.4 39.5,297.4 40.5,291.3 41.5,294.6 42.5,294.8 43.5,290.4 44.5,292.6 45.5,294.8 46.5,292.8 47.5,294.2 48.5,289.0 49.5,283.4 50.5,271.1 51.5,285.4 52.5,294.0 53.5,291.3 54.5,292.4 55.5,289.3 56.5,291.8 57.5,287.1 58.5,288.5 59.5,291.3 60.5,291.5 61.5,289.0 62.5,286.3 63.5,287.4 64.5,286.9 65.5,287.6 66.5,291.7 67.5,287.4 68.5,292.6 69.5,292.7 70.5,286.8 71.5,289.3 72.5,290.2 73.5,286.8 74.5,289.9 75.5,293.6 76.5,287.8 77.5,291.5 78.5,288.0 79.5,291.5 80.5,293.8 81.5,288.5 82.5,286.9 83.5,287.2 84.5,290.4 85.5,286.3 86.5,286.6 87.5,289.5 88.5,292.4 89.5,288.5 90.5,286.5 91.5,285.3 92.5,284.4 93.5,289.7 94.5,286.8 95.5,290.2 96.5,292.9 97.5,286.3 98.5,290.2 99.5,290.7 100.5,287.4 101.5,288.1 102.5,293.4 103.5,293.3 104.5,286.7 105.5,291.0 106.5,292.7 107.5,287.3 108.5,290.0 109.5,285.7 110.5,288.0 111.5,290.2 112.5,289.5 113.5,290.9 114.5,285.7 115.5,287.6 116.5,291.4 117.5,289.2 118.5,288.2 119.5,287.8 120.5,291.2 121.5,286.2 122.5,280.2 123.5,284.2 124.5,282.0 125.5,287.3 126.5,288.0 127.5,289.8 128.5,289.1 129.5,287.5 130.5,291.6 131.5,287.8 132.5,293.0 133.5,287.6 134.5,293.3 135.5,293.6 136.5,291.5 137.5,293.2 138.5,289.9 139.5,293.7 140.5,291.4 141.5,289.9 142.5,295.2 143.5,290.9 144.5,290.6 145.5,294.1 146.5,290.4 147.5,292.5 148.5,288.7 149.5,293.6 150.5,289.8 151.5,289.4 152.5,297.4 153.5,292.6 154.5,299.4 155.5,300.9 156.5,299.2 157.5,294.1 158.5,291.8 159.5,290.2 160.5,290.1 161.5,291.5 162.5,294.0 163.5,289.2 164.5,287.4 165.5,290.4 166.5,287.0 167.5,286.4 168.5,289.7 169.5,290.6 170.5,284.9 171.5,285.9 172.5,286.0 173.5,284.7 174.5,280.0 175.5,285.1 176.5,284.3 177.5,290.8 178.5,291.5 179.5,292.6 180.5,290.0 181.5,287.2 182.5,286.9 183.5,290.6 184.5,288.0 185.5,291.5 186.5,287.6 187.5,292.8 188.5,288.8 189.5,287.3 190.5,288.2 191.5,289.6 192.5,289.7 193.5,287.7 194.5,285.4 195.5,286.9 196.5,289.7 197.5,286.5 198.5,290.0 199.5,283.8 200.5,291.4 201.5,291.1 202.5,289.1 203.5,289.4 204.5,290.0 205.5,292.2 206.5,284.3 207.5,286.9 208.5,285.1 209.5,282.9 210.5,285.6 211.5,285.1 212.5,280.1 213.5,284.1 214.5,281.9 215.5,281.8 216.5,282.7 217.5,278.2 218.5,282.1 219.5,280.2 220.5,283.7 221.5,278.7 222.5,282.9 223.5,282.0 224.5,281.0 225.5,282.4 226.5,275.3 227.5,278.6 228.5,277.8 229.5,277.5 230.5,274.6 231.5,271.2 232.5,272.6 233.5,277.4 234.5,276.0 235.5,276.9 236.5,279.9 237.5,280.6 238.5,281.0 239.5,277.1 240.5,282.5 241.5,279.2 242.5,282.4 243.5,276.5 244.5,283.4 245.5,280.7 246.5,283.7 247.5,283.8 248.5,282.8 249.5,277.5 250.5,279.4 251.5,278.7 252.5,282.8 253.5,278.6 254.5,278.9 255.5,277.8 256.5,277.1 257.5,282.5 258.5,282.0 259.5,276.8 260.5,278.9 261.5,276.1 262.5,276.1 263.5,274.8 264.5,276.6 265.5,273.5 266.5,273.4 267.5,275.2 268.5,273.0 269.5,275.4 270.5,279.7 271.5,273.5 272.5,274.6 273.5,280.4 274.5,275.4 275.5,277.2 276.5,281.6 277.5,279.8 278.5,276.9 279.5,275.7 280.5,277.3 281.5,277.5 282.5,281.2 283.5,282.5 284.5,281.1 285.5,282.1 286.5,282.5 287.5,282.3 288.5,282.8 289.5,283.4 290.5,277.1 291.5,279.0 292.5,278.6 293.5,281.5 294.5,280.8 295.5,279.7 296.5,283.0 297.5,279.5 298.5,277.8 299.5,278.0 300.5,279.1 301.5,279.9 302.5,279.3 303.5,278.0 304.5,275.8 305.5,277.4 306.5,277.2 307.5,276.3 308.5,279.4 309.5,277.0 310.5,281.2 311.5,281.1 312.5,277.6 313.5,281.5 314.5,279.7 315.5,280.6 316.5,281.8 317.5,282.9 318.5,283.8 319.5,282.7 320.5,278.9 321.5,281.3 322.5,279.8 323.5,277.4 324.5,281.4 325.5,281.1 326.5,284.6 327.5,281.2 328.5,285.6 329.5,283.8 330.5,281.0 331.5,285.6 332.5,282.4 333.5,284.2 334.5,280.8 335.5,280.4 336.5,287.1 337.5,280.6 338.5,281.4 339.5,281.5 340.5,281.0 341.5,286.3 342.5,287.5 343.5,284.9 344.5,282.9 345.5,286.5 346.5,283.6 347.5,280.8 348.5,284.8 349.5,282.3 350.5,281.6 351.5,281.9 352.5,282.3 353.5,280.7 354.5,283.9 355.5,285.8 356.5,283.6 357.5,279.5 358.5,284.6 359.5,279.7 360.5,283.2 361.5,286.1 362.5,284.8 363.5,286.6 364.5,285.5 365.5,282.0 366.5,281.1 367.5,283.5 368.5,285.2 369.5,282.0 370.5,282.7 371.5,285.8 372.5,282.9 373.5,284.7 374.5,284.3 375.5,287.2 376.5,280.5 377.5,281.7 378.5,286.1 379.5,285.3 380.5,280.9 381.5,280.8 382.5,281.1 383.5,283.3 384.5,285.6 385.5,280.3 386.5,279.9 387.5,283.1 388.5,280.9 389.5,283.7 390.5,284.6 391.5,283.9 392.5,282.1 393.5,280.3 394.5,276.9 395.5,282.2 396.5,278.9 397.5,279.2 398.5,280.3 399.5,282.5 400.5,279.3 401.5,281.8 402.5,281.9 403.5,275.2 404.5,277.0 405.5,280.8 406.5,279.7 407.5,281.0 408.5,275.0 409.5,277.3 410.5,280.1 411.5,276.8 412.5,277.5 413.5,279.5 414.5,273.2 415.5,272.1 416.5,277.7 417.5,275.3 418.5,272.2 419.5,276.6 420.5,272.2 421.5,270.8 422.5,271.8 423.5,269.5 424.5,272.0 425.5,274.4 426.5,271.7 427.5,275.2 428.5,268.1 429.5,268.7 430.5,268.2 431.5,271.1 432.5,268.0 433.5,271.2 434.5,269.8 435.5,269.9 436.5,271.6 437.5,270.9 438.5,271.6 439.5,265.6 440.5,267.0 441.5,271.0 442.5,266.5 443.5,265.4 444.5,266.5 445.5,264.0 446.5,268.6 447.5,266.8 448.5,262.4 449.5,268.6 450.5,265.0 451.5,262.6 452.5,264.8 453.5,266.9 454.5,262.1 455.5,258.6 456.5,258.3 457.5,255.6 458.5,257.0 459.5,253.1 460.5,254.8 461.5,251.6 462.5,255.7 463.5,262.2 464.5,260.7 465.5,260.8 466.5,256.7 467.5,255.1 468.5,259.0" fill="none" stroke="#ff9000" stroke-width="1.1" shape-rendering="crispEdges"/>
<rect x="52.3" y="291" width="1" height="37" fill="#ff9000"/>
<rect x="54.8" y="291" width="1" height="37" fill="#ff9000"/>
<rect x="52.7" y="328" width="1.3" height="38" fill="#ff9000"/>
<rect x="65.1" y="290" width="1" height="38" fill="#ff9000"/>
<rect x="67.9" y="290" width="1" height="38" fill="#ff9000"/>
<rect x="66.0" y="328" width="2.1" height="38" fill="#ff9000"/>
<rect x="228.0" y="281" width="1" height="43" fill="#ff9000"/>
<rect x="230.5" y="281" width="1" height="43" fill="#ff9000"/>
<rect x="229.0" y="324" width="1.2" height="42" fill="#ff9000"/>
<rect x="467.8" y="258" width="2" height="108" fill="#ff9000"/>
</g>
<rect x="471" y="40" width="1.2" height="161" fill="#fff"/>
<rect x="471" y="205" width="1.2" height="161.5" fill="#fff"/>
</svg>
<span class="t" style="left:10.9px;top:36.8px;letter-spacing:-0.53px;">320</span>
<span class="t" style="left:10.9px;top:76.8px;letter-spacing:-0.53px;">240</span>
<span class="t" style="left:10.9px;top:116.8px;letter-spacing:-0.53px;">160</span>
<span class="t" style="left:16.6px;top:156.8px;letter-spacing:-0.63px;">80</span>
<span class="t" style="left:16.6px;top:196.8px;letter-spacing:-0.63px;">40</span>
<span class="t" style="left:16.6px;top:236.8px;letter-spacing:-0.63px;">30</span>
<span class="t" style="left:16.6px;top:276.8px;letter-spacing:-0.63px;">20</span>
<span class="t" style="left:16.6px;top:316.8px;letter-spacing:-0.63px;">10</span>
<span class="t" style="left:16.6px;top:356.8px;letter-spacing:-0.63px;">L9</span>
<span class="t" style="left:487.4px;top:198.0px;letter-spacing:-0.26px;">20%</span>
<span class="t" style="left:487.4px;top:238.0px;letter-spacing:-0.26px;">15%</span>
<span class="t" style="left:487.4px;top:278.0px;letter-spacing:-0.26px;">10%</span>
<span class="t" style="left:487.4px;top:318.0px;letter-spacing:-0.40px;">5%</span>
<span class="t" style="left:487.4px;top:358.0px;letter-spacing:-0.56px;">R9</span>
<span class="t" style="left:123.8px;top:377.6px;letter-spacing:-0.61px;">1GB</span>
<span class="t" style="left:223.8px;top:377.6px;letter-spacing:-0.61px;">2GB</span>
<span class="t" style="left:323.8px;top:377.6px;letter-spacing:-0.61px;">3GB</span>
<span class="t" style="left:423.8px;top:377.6px;letter-spacing:-0.61px;">4GB</span>
<span class="t" style="left:512.4px;top:43.0px;letter-spacing:-0.39px;word-spacing:1.0px;">Scan Drv1</span>
<span class="t" style="left:512.4px;top:65.6px;letter-spacing:-0.87px;word-spacing:1.0px;">MID Code</span>
<span class="t" style="left:512.6px;top:85.6px;letter-spacing:-0.25px;">Type/Book</span>
<div class="sunk" style="left:567px;top:38px;width:176px;height:20px"><span class="t" style="left:4.9px;top:4.0px;letter-spacing:-0.44px;">BENQ &nbsp; &nbsp;DVD DD DW1640 BSKB</span></div>
<div class="sunk" style="left:567px;top:60px;width:176px;height:20px"><span class="t" style="left:55.7px;top:4.6px;letter-spacing:-0.70px;">MCC03RG20</span></div>
<div class="sunk" style="left:567px;top:82px;width:86px;height:19px"><span class="t" style="left:25.0px;top:2.6px;letter-spacing:-0.71px;">DVD-R</span></div>
<div class="sunk" style="left:658px;top:82px;width:85px;height:19px"><span class="t" style="left:24.8px;top:2.6px;letter-spacing:-0.71px;">DVD-R</span></div>
<svg class="abs" style="left:536px;top:111px" width="17" height="17" viewBox="0 0 17 17"><circle cx="8.5" cy="8.5" r="7" fill="#0000f0" stroke="#000" stroke-width="1.15"/><circle cx="8.5" cy="8.5" r="6.1" fill="none" stroke="#6a6420" stroke-width="0.6"/><path d="M5.3 8.8 L8.7 5.8" stroke="#fff" stroke-width="1.3" stroke-linecap="round"/></svg>
<svg class="abs" style="left:621px;top:111px" width="17" height="17" viewBox="0 0 17 17"><circle cx="8.5" cy="8.5" r="7" fill="#00e000" stroke="#000" stroke-width="1.15"/><circle cx="8.5" cy="8.5" r="6.1" fill="none" stroke="#6a6420" stroke-width="0.6"/><path d="M5.3 8.8 L8.7 5.8" stroke="#fff" stroke-width="1.3" stroke-linecap="round"/></svg>
<svg class="abs" style="left:706px;top:111px" width="17" height="17" viewBox="0 0 17 17"><circle cx="8.5" cy="8.5" r="7" fill="#ff9000" stroke="#000" stroke-width="1.15"/><circle cx="8.5" cy="8.5" r="6.1" fill="none" stroke="#6a6420" stroke-width="0.6"/><path d="M5.3 8.8 L8.7 5.8" stroke="#fff" stroke-width="1.3" stroke-linecap="round"/></svg>
<span class="t" style="left:517.4px;top:127.0px;letter-spacing:-0.75px;word-spacing:1.0px;">PI Graph 1</span>
<span class="t" style="left:600.5px;top:127.0px;letter-spacing:-0.74px;word-spacing:1.0px;">PIF Graph 1</span>
<span class="t" style="left:696.9px;top:127.0px;letter-spacing:-0.56px;word-spacing:1.0px;">Jitter 1</span>
<span class="t" style="left:569.8px;top:144.0px;letter-spacing:-0.43px;">Line</span>
<span class="t" style="left:659.6px;top:144.0px;letter-spacing:-0.42px;">Block</span>
<svg class="abs" style="left:606px;top:144px" width="12" height="12" viewBox="0 0 12 12"><circle cx="6" cy="6" r="5.5" fill="#fff"/><path d="M1.9 10.1 A5.5 5.5 0 0 1 10.1 1.9" fill="none" stroke="#808080" stroke-width="1"/><path d="M10.1 1.9 A5.5 5.5 0 0 1 1.9 10.1" fill="none" stroke="#fff" stroke-width="1"/><path d="M2.6 9.4 A4.5 4.5 0 0 1 9.4 2.6" fill="none" stroke="#303030" stroke-width="1.2"/><path d="M9.4 2.6 A4.5 4.5 0 0 1 2.6 9.4" fill="none" stroke="#d4d0c8" stroke-width="1"/><circle cx="6" cy="6" r="2" fill="#000"/></svg>
<svg class="abs" style="left:696px;top:144px" width="12" height="12" viewBox="0 0 12 12"><circle cx="6" cy="6" r="5.5" fill="#fff"/><path d="M1.9 10.1 A5.5 5.5 0 0 1 10.1 1.9" fill="none" stroke="#808080" stroke-width="1"/><path d="M10.1 1.9 A5.5 5.5 0 0 1 1.9 10.1" fill="none" stroke="#fff" stroke-width="1"/><path d="M2.6 9.4 A4.5 4.5 0 0 1 9.4 2.6" fill="none" stroke="#303030" stroke-width="1.2"/><path d="M9.4 2.6 A4.5 4.5 0 0 1 2.6 9.4" fill="none" stroke="#d4d0c8" stroke-width="1"/></svg>
<span class="t" style="left:532.5px;top:173.1px;letter-spacing:-0.29px;word-spacing:1.0px;">Jitter Inst</span>
<span class="t" style="left:538.6px;top:188.0px;letter-spacing:-0.17px;">12.3%</span>
<span class="t" style="left:597.8px;top:173.1px;letter-spacing:-0.46px;word-spacing:1.0px;">Jitter Peak</span>
<span class="t" style="left:603.7px;top:188.0px;letter-spacing:-0.17px;">15.3%</span>
<span class="t" style="left:662.6px;top:173.1px;letter-spacing:0.04px;">Jitter Avg</span>
<span class="t" style="left:668.7px;top:188.0px;letter-spacing:-0.35px;">10.2%</span>
<span class="t" style="left:512.4px;top:223.0px;letter-spacing:-0.39px;word-spacing:1.0px;">Scan Drv2</span>
<span class="t" style="left:512.4px;top:245.6px;letter-spacing:-0.87px;word-spacing:1.0px;">MID Code</span>
<span class="t" style="left:512.6px;top:265.6px;letter-spacing:-0.25px;">Type/Book</span>
<div class="sunk" style="left:567px;top:218px;width:176px;height:20px"><div class="abs" style="left:0;top:0;width:168.6px;height:18px;overflow:hidden"><span class="t" style="left:4.9px;top:4.0px;letter-spacing:-0.55px;word-spacing:1.0px;">LITE-ON DVDRW SOHW-832S VS0</span></div></div>
<div class="sunk" style="left:567px;top:240px;width:176px;height:20px"><span class="t" style="left:55.7px;top:4.6px;letter-spacing:-0.70px;">MCC03RG20</span></div>
<div class="sunk" style="left:567px;top:262px;width:86px;height:19px"><span class="t" style="left:25.0px;top:2.6px;letter-spacing:-0.71px;">DVD-R</span></div>
<div class="sunk" style="left:658px;top:262px;width:85px;height:19px"><span class="t" style="left:24.8px;top:2.6px;letter-spacing:-0.71px;">DVD-R</span></div>
<svg class="abs" style="left:536px;top:291px" width="17" height="17" viewBox="0 0 17 17"><circle cx="8.5" cy="8.5" r="7" fill="#f00000" stroke="#000" stroke-width="1.15"/><circle cx="8.5" cy="8.5" r="6.1" fill="none" stroke="#6a6420" stroke-width="0.6"/><path d="M5.3 8.8 L8.7 5.8" stroke="#fff" stroke-width="1.3" stroke-linecap="round"/></svg>
<svg class="abs" style="left:621px;top:291px" width="17" height="17" viewBox="0 0 17 17"><circle cx="8.5" cy="8.5" r="7" fill="#f0f000" stroke="#000" stroke-width="1.15"/><circle cx="8.5" cy="8.5" r="6.1" fill="none" stroke="#6a6420" stroke-width="0.6"/><path d="M5.3 8.8 L8.7 5.8" stroke="#fff" stroke-width="1.3" stroke-linecap="round"/></svg>
<svg class="abs" style="left:706px;top:291px" width="17" height="17" viewBox="0 0 17 17"><circle cx="8.5" cy="8.5" r="7" fill="#00e0e8" stroke="#000" stroke-width="1.15"/><circle cx="8.5" cy="8.5" r="6.1" fill="none" stroke="#6a6420" stroke-width="0.6"/><path d="M5.3 8.8 L8.7 5.8" stroke="#fff" stroke-width="1.3" stroke-linecap="round"/></svg>
<span class="t" style="left:517.4px;top:307.0px;letter-spacing:-0.75px;word-spacing:1.0px;">PI Graph 2</span>
<span class="t" style="left:600.5px;top:307.0px;letter-spacing:-0.74px;word-spacing:1.0px;">PIF Graph 2</span>
<span class="t" style="left:696.9px;top:307.0px;letter-spacing:-0.56px;word-spacing:1.0px;">Jitter 2</span>
<span class="t" style="left:569.8px;top:324.0px;letter-spacing:-0.43px;">Line</span>
<span class="t" style="left:659.6px;top:324.0px;letter-spacing:-0.42px;">Block</span>
<svg class="abs" style="left:606px;top:324px" width="12" height="12" viewBox="0 0 12 12"><circle cx="6" cy="6" r="5.5" fill="#fff"/><path d="M1.9 10.1 A5.5 5.5 0 0 1 10.1 1.9" fill="none" stroke="#808080" stroke-width="1"/><path d="M10.1 1.9 A5.5 5.5 0 0 1 1.9 10.1" fill="none" stroke="#fff" stroke-width="1"/><path d="M2.6 9.4 A4.5 4.5 0 0 1 9.4 2.6" fill="none" stroke="#303030" stroke-width="1.2"/><path d="M9.4 2.6 A4.5 4.5 0 0 1 2.6 9.4" fill="none" stroke="#d4d0c8" stroke-width="1"/><circle cx="6" cy="6" r="2" fill="#000"/></svg>
<svg class="abs" style="left:696px;top:324px" width="12" height="12" viewBox="0 0 12 12"><circle cx="6" cy="6" r="5.5" fill="#fff"/><path d="M1.9 10.1 A5.5 5.5 0 0 1 10.1 1.9" fill="none" stroke="#808080" stroke-width="1"/><path d="M10.1 1.9 A5.5 5.5 0 0 1 1.9 10.1" fill="none" stroke="#fff" stroke-width="1"/><path d="M2.6 9.4 A4.5 4.5 0 0 1 9.4 2.6" fill="none" stroke="#303030" stroke-width="1.2"/><path d="M9.4 2.6 A4.5 4.5 0 0 1 2.6 9.4" fill="none" stroke="#d4d0c8" stroke-width="1"/></svg>
<span class="t" style="left:532.5px;top:353.2px;letter-spacing:-0.29px;word-spacing:1.0px;">Jitter Inst2</span>
<span class="t" style="left:597.8px;top:353.2px;letter-spacing:-0.42px;word-spacing:1.0px;">Jitter Peak2</span>
<span class="t" style="left:662.6px;top:353.2px;letter-spacing:0.04px;">Jitter Avg</span>
<span class="t" style="left:45.3px;top:405.9px;letter-spacing:-0.47px;word-spacing:1.0px;">PI Total</span>
<span class="t" style="left:41.6px;top:417.5px;letter-spacing:-0.17px;">1031964</span>
<span class="t" style="left:111.6px;top:405.9px;letter-spacing:-0.94px;word-spacing:1.0px;">PI Peak</span>
<span class="t" style="left:119.5px;top:417.5px;letter-spacing:-0.43px;">187</span>
<span class="t" style="left:173.6px;top:405.9px;letter-spacing:-0.30px;word-spacing:1.0px;">PI Avg</span>
<span class="t" style="left:187.3px;top:417.5px;letter-spacing:-1.63px;">61</span>
<span class="t" style="left:236.5px;top:405.9px;letter-spacing:-0.51px;word-spacing:1.0px;">PIF Total</span>
<span class="t" style="left:247.2px;top:417.5px;letter-spacing:-0.16px;">7458</span>
<span class="t" style="left:298.8px;top:405.9px;letter-spacing:-0.96px;word-spacing:1.0px;">PIF Peak</span>
<span class="t" style="left:319.6px;top:417.5px;letter-spacing:-0.33px;">35</span>
<span class="t" style="left:374.5px;top:405.9px;letter-spacing:-0.34px;word-spacing:1.0px;">PIF Avg</span>
<span class="t" style="left:389.3px;top:417.5px;letter-spacing:0.00px;">1</span>
<span class="t" style="left:438.7px;top:405.9px;letter-spacing:-0.48px;word-spacing:1.0px;">POF Total</span>
<span class="t" style="left:447.6px;top:417.5px;letter-spacing:-0.53px;">671</span>
<span class="t" style="left:45.3px;top:456.0px;letter-spacing:-0.55px;word-spacing:1.0px;">PI Total 2</span>
<span class="t" style="left:50.8px;top:468.1px;letter-spacing:-0.32px;">5672</span>
<span class="t" style="left:111.6px;top:456.0px;letter-spacing:-0.84px;word-spacing:1.0px;">PI Peak 2</span>
<span class="t" style="left:122.5px;top:468.1px;letter-spacing:-0.23px;">42</span>
<span class="t" style="left:173.6px;top:456.0px;letter-spacing:-0.44px;word-spacing:1.0px;">PI Avg 2</span>
<span class="t" style="left:188.0px;top:468.1px;letter-spacing:-1.43px;">14</span>
<span class="t" style="left:236.5px;top:456.0px;letter-spacing:-0.46px;word-spacing:1.0px;">PIF Total2</span>
<span class="t" style="left:247.2px;top:468.1px;letter-spacing:-0.16px;">1243</span>
<span class="t" style="left:298.8px;top:456.0px;letter-spacing:-0.89px;word-spacing:1.0px;">PIF Peak2</span>
<span class="t" style="left:320.4px;top:468.1px;letter-spacing:-1.13px;">19</span>
<span class="t" style="left:374.5px;top:456.0px;letter-spacing:-0.39px;word-spacing:1.0px;">PIF Avg2</span>
<span class="t" style="left:388.8px;top:468.1px;letter-spacing:0.00px;">3</span>
<span class="t" style="left:438.7px;top:456.0px;letter-spacing:-0.51px;word-spacing:1.0px;">POF Total 2</span>
<span class="t" style="left:454.8px;top:468.1px;letter-spacing:0.00px;">0</span>
<span class="t" style="left:13.0px;top:494.2px;letter-spacing:-0.24px;">Burn</span>
<span class="t" style="left:7.6px;top:508.2px;letter-spacing:-0.61px;word-spacing:1.0px;">Drive 1</span>
<span class="t" style="left:13.0px;top:519.1px;letter-spacing:-0.24px;">Burn</span>
<span class="t" style="left:7.6px;top:533.1px;letter-spacing:-0.61px;word-spacing:1.0px;">Drive 2</span>
<div class="lcd" style="left:48px;top:495.0px;width:448px;height:23px"><div class="lcdbg"></div><div class="lcdclip"><div class="lcdtx">Test Complete in 09:41</div></div></div>
<div class="lcd" style="left:48px;top:520.3px;width:448px;height:23px"><div class="lcdbg"></div><div class="lcdclip"><div class="lcdtx">Test Complete</div></div></div>
<div class="btn" style="left:503px;top:494px;width:65px;height:21px"></div><span class="t" style="left:512.7px;top:498.4px;letter-spacing:-0.71px;">Comment</span>
<div class="btn" style="left:503px;top:522px;width:65px;height:21px"></div><span class="t" style="left:512.7px;top:526.4px;letter-spacing:-0.71px;">Comment</span>
<div class="grp" style="left:579px;top:422px;width:158px;height:123px"></div>
<div class="abs" style="left:585px;top:416px;width:109px;height:12px;background:#d4d0c8"></div>
<span class="t" style="left:587.6px;top:415.4px;letter-spacing:-0.25px;word-spacing:1.0px;">Snapshot &amp; Clipboard</span>
<svg class="abs" style="left:616px;top:465px" width="28" height="23" viewBox="616 465 28 23">
<defs><pattern id="dots" width="2" height="2" patternUnits="userSpaceOnUse"><rect width="2" height="2" fill="#ececec"/><rect width="1" height="1" fill="#c0c0c0"/><rect x="1" y="1" width="1" height="1" fill="#cecece"/></pattern>
<radialGradient id="lens" cx="0.42" cy="0.42" r="0.62"><stop offset="0" stop-color="#a0a0a0"/><stop offset="0.4" stop-color="#3c3c3c"/><stop offset="0.75" stop-color="#6c6c6c"/><stop offset="1" stop-color="#949494"/></radialGradient></defs>
<rect x="619.2" y="466.8" width="2.2" height="3" fill="#b0b0b0"/>
<rect x="619.6" y="467" width="1" height="2.5" fill="#f4f4f4"/>
<rect x="617.3" y="469" width="24.6" height="16.5" rx="1" fill="#ececec" stroke="#c8c8c8" stroke-width="0.8"/>
<rect x="617.6" y="469.4" width="24" height="1.2" fill="#fafafa"/>
<rect x="617.8" y="483.6" width="23.6" height="1.7" fill="#c2c2c2"/>
<rect x="618.6" y="471.4" width="5" height="11" fill="url(#dots)"/>
<rect x="635.6" y="471.4" width="5" height="11" fill="url(#dots)"/>
<circle cx="629.5" cy="477" r="5.3" fill="#a4a4a4"/>
<circle cx="629.5" cy="477" r="4.4" fill="url(#lens)"/>
<circle cx="629.4" cy="477" r="1.9" fill="#262626"/>
<circle cx="628.5" cy="476" r="0.8" fill="#d8d8d8"/>
</svg>
<svg class="abs" style="left:672px;top:462px" width="28" height="28" viewBox="672 462 28 28">
<defs><linearGradient id="brd" x1="0" y1="0" x2="0" y2="1"><stop offset="0" stop-color="#c48a58"/><stop offset="1" stop-color="#a8682f"/></linearGradient>
<linearGradient id="clp" x1="0" y1="0" x2="0" y2="1"><stop offset="0" stop-color="#f4f4f4"/><stop offset="1" stop-color="#b4b4b4"/></linearGradient></defs>
<rect x="674.2" y="466.3" width="17.8" height="21.4" rx="1.6" fill="url(#brd)" stroke="#8e5424" stroke-width="0.9"/>
<path d="M676.9 470.2 L676.9 468.9 Q676.9 467.7 678.1 467.6 L680.6 467.4 Q680.9 464.1 683.1 464.1 Q685.3 464.1 685.6 467.4 L688.1 467.6 Q689.3 467.7 689.3 468.9 L689.3 470.2 Z" fill="url(#clp)" stroke="#8a8a8a" stroke-width="0.7"/>
<circle cx="683.1" cy="466" r="0.9" fill="#8a8a8a"/>
<path d="M685 469 L694.5 469 L697.6 472.2 L697.6 485.4 L685 485.4 Z" fill="#f8f8f8" stroke="#98a0a8" stroke-width="0.8"/>
<path d="M694.3 469 L697.6 472.4 L694.3 472.4 Z" fill="#4c98e8"/>
<path d="M686.8 474.6 H695.8 M686.8 477.2 H695.8 M686.8 479.8 H695.8 M686.8 482.4 H695.8" stroke="#bcbcbc" stroke-width="1.3"/>
</svg>
<svg class="abs" style="left:18px;top:505px" width="46" height="46" viewBox="18 505 46 46">
<clipPath id="dl"><rect x="18" y="505" width="30" height="46"/><rect x="48" y="518" width="20" height="2.3"/><rect x="48" y="543.3" width="20" height="8"/></clipPath>
<circle cx="38.6" cy="527" r="18" fill="rgba(255,255,255,.13)"/>
<circle cx="38.6" cy="527" r="18" fill="rgba(255,255,255,.20)" stroke="rgba(110,110,110,.28)" stroke-width="1" clip-path="url(#dl)"/>
<circle cx="39.6" cy="527.2" r="6.4" fill="rgba(255,255,255,.36)"/>
<circle cx="39.6" cy="527.2" r="3" fill="rgba(190,187,181,.95)"/>
</svg>
<div class="wm">CDRLabs.com</div>
</div></body></html>
